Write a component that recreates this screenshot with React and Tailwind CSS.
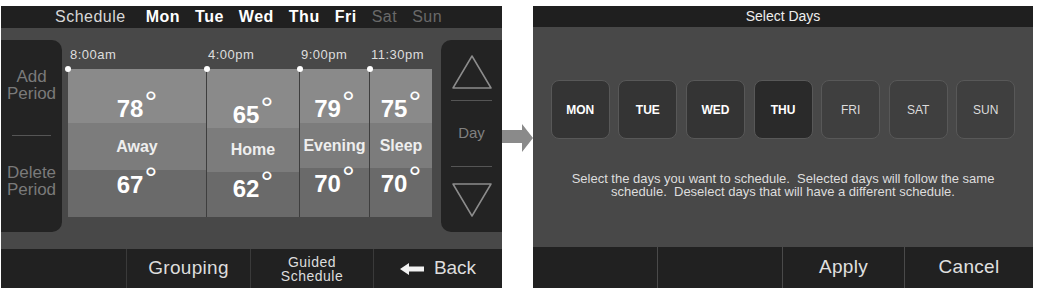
import React from "react";

const columns = [
  { time: "8:00am", w: "w-[138px]", hi: 78, lo: 67, name: "Away", rows: ["h-[54px]", "h-[47px]", "h-[47px]"], pb: "pb-[2px]", pt: "pt-[3px]" },
  { time: "4:00pm", w: "w-[93px]", hi: 65, lo: 62, name: "Home", rows: ["h-[59px]", "h-[44px]", "h-[45px]"], pb: "pb-[1px]", pt: "pt-[5px]" },
  { time: "9:00pm", w: "w-[70px]", hi: 79, lo: 70, name: "Evening", rows: ["h-[54px]", "h-[45px]", "h-[49px]"], pb: "pb-[2px]", pt: "pt-[4px]" },
  { time: "11:30pm", w: "w-[63px]", hi: 75, lo: 70, name: "Sleep", rows: ["h-[54px]", "h-[45px]", "h-[49px]"], pb: "pb-[2px]", pt: "pt-[4px]" },
];

const days = [
  { label: "MON", state: "on" },
  { label: "TUE", state: "on" },
  { label: "WED", state: "on" },
  { label: "THU", state: "current" },
  { label: "FRI", state: "off" },
  { label: "SAT", state: "off" },
  { label: "SUN", state: "off" },
];

const Temp = ({ value }) => (
  <span className="text-[24px] leading-none font-bold text-white">
    {value}
    <span className="font-normal text-[32px] leading-[0px] align-[4px] ml-[1px]">°</span>
  </span>
);

const Triangle = ({ down }) => (
  <svg width="42" height="36" viewBox="0 0 42 36">
    <path
      d={down ? "M21 34 L40 2 L2 2 Z" : "M21 2 L40 34 L2 34 Z"}
      fill="none"
      stroke="#8c8c8c"
      strokeWidth="1.5"
      strokeLinejoin="round"
    />
  </svg>
);

const ScheduleColumn = ({ col, first }) => (
  <div className={`flex flex-col ${col.w}`}>
    <div className="h-[29px] leading-[29px] text-[13px] tracking-[0.5px] text-[#dedede] pl-[2px] whitespace-nowrap">
      {col.time}
    </div>
    <div className={`relative flex flex-col ${first ? "" : "border-l border-[#3e3e3e]"}`}>
      <span className="absolute -left-[3px] -top-[3px] w-[6px] h-[6px] rounded-full bg-white" />
      <div className={`${col.rows[0]} bg-[#8a8a8a] flex items-end justify-center ${col.pb}`}>
        <Temp value={col.hi} />
      </div>
      <div className={`${col.rows[1]} bg-[#7c7c7c] flex items-center justify-center text-[16px] font-bold text-[#eeeeee]`}>
        {col.name}
      </div>
      <div className={`${col.rows[2]} bg-[#6a6a6a] flex items-start justify-center ${col.pt}`}>
        <Temp value={col.lo} />
      </div>
    </div>
  </div>
);

const ScheduleScreen = () => (
  <div className="w-[501px] h-[282px] flex flex-col bg-[#484848]">
    <div className="h-[22px] bg-[#202020] flex items-center pl-[54px] text-[16px] tracking-[0.5px] gap-[15px]">
      <span className="text-[#d8d8d8] mr-[5px]">Schedule</span>
      <span className="font-bold text-white">Mon</span>
      <span className="font-bold text-white">Tue</span>
      <span className="font-bold text-white">Wed</span>
      <span className="font-bold text-white">Thu</span>
      <span className="font-bold text-white">Fri</span>
      <span className="text-[#696969]">Sat</span>
      <span className="text-[#696969]">Sun</span>
    </div>

    <div className="flex-1 flex items-start pt-[12px]">
      <div className="w-[61px] h-[192px] bg-[#232323] rounded-r-[10px] flex flex-col text-[17px] leading-[17px] text-[#7a7a7a] text-center">
        <div className="h-[95px] flex flex-col items-center justify-center pb-[6px]">
          <span>Add</span>
          <span>Period</span>
        </div>
        <div className="h-px mx-[11px] bg-[#555555]" />
        <div className="flex-1 flex flex-col items-center justify-center pb-[6px]">
          <span>Delete</span>
          <span>Period</span>
        </div>
      </div>

      <div className="flex ml-[6px] mr-[9px] w-[364px]">
        {columns.map((col, i) => (
          <ScheduleColumn key={col.name} col={col} first={i === 0} />
        ))}
      </div>

      <div className="w-[61px] h-[192px] bg-[#232323] rounded-l-[10px] flex flex-col">
        <div className="h-[60px] flex items-center justify-center pt-[4px]">
          <Triangle />
        </div>
        <div className="h-px mx-[10px] bg-[#555555]" />
        <div className="h-[65px] flex items-center justify-center text-[15px] text-[#808080]">Day</div>
        <div className="h-px mx-[10px] bg-[#555555]" />
        <div className="flex-1 flex items-center justify-center">
          <Triangle down />
        </div>
      </div>
    </div>

    <div className="h-[39px] bg-[#212121] grid grid-cols-[125px_124px_123px_1fr] text-[#dddddd]">
      <div />
      <div className="border-l border-[#3a3a3a] flex items-center justify-center text-[19px] tracking-[0.3px]">
        Grouping
      </div>
      <div className="border-l border-[#3a3a3a] flex flex-col items-center justify-center text-[14px] leading-[14px] tracking-[0.5px]">
        <span>Guided</span>
        <span>Schedule</span>
      </div>
      <div className="border-l border-[#3a3a3a] flex items-center justify-center gap-[10px] text-[19px]">
        <svg width="24" height="12" viewBox="0 0 24 12">
          <path d="M0 6 L9 0 L9 3.5 L24 3.5 L24 8.5 L9 8.5 L9 12 Z" fill="#f2f2f2" />
        </svg>
        <span>Back</span>
      </div>
    </div>
  </div>
);

const DayButton = ({ day }) => {
  const fill =
    day.state === "current" ? "bg-[#2a2a2a]" : day.state === "on" ? "bg-[#343434]" : "bg-[#3f3f3f]";
  const text = day.state === "off" ? "font-normal text-[#dcdcdc]" : "font-bold text-white";
  return (
    <div
      className={`w-[59px] h-[59px] rounded-[8px] border border-[#585858] flex items-center justify-center text-[12px] ${fill} ${text}`}
    >
      {day.label}
    </div>
  );
};

const SelectDaysScreen = () => (
  <div className="w-[500px] h-[282px] flex flex-col bg-[#484848]">
    <div className="h-[21px] bg-[#1f1f1f] flex items-center justify-center text-[14px] text-[#eeeeee]">
      Select Days
    </div>
    <div className="flex-1 flex flex-col items-center pt-[53px]">
      <div className="flex gap-[8.6px]">
        {days.map((d) => (
          <DayButton key={d.label} day={d} />
        ))}
      </div>
      <p className="mt-[33px] text-center text-[13px] leading-[13px] text-[#dddddd] whitespace-nowrap">
        Select the days you want to schedule.{"\u00a0 "}Selected days will follow the same
        <br />
        schedule.{"\u00a0 "}Deselect days that will have a different schedule.
      </p>
    </div>
    <div className="h-[41px] bg-[#212121] grid grid-cols-[124px_125px_122px_1fr] text-[19px] tracking-[0.3px] text-[#e0e0e0]">
      <div />
      <div className="border-l border-[#4a4a4a]" />
      <div className="border-l border-[#4a4a4a] flex items-center justify-center">Apply</div>
      <div className="border-l border-[#4a4a4a] flex items-center justify-center">Cancel</div>
    </div>
  </div>
);

export default function App() {
  return (
    <div className="w-[1037px] h-[294px] bg-white flex items-start pt-[6px] pl-[1px] font-['Liberation_Sans',Arial,sans-serif]">
      <ScheduleScreen />
      <div className="w-[31px] pt-[118px]">
        <svg width="31" height="28" viewBox="0 0 31 28">
          <path d="M0 6 L20 6 L20 0 L31 14 L20 28 L20 19 L0 19 Z" fill="#8a8a8a" />
        </svg>
      </div>
      <SelectDaysScreen />
    </div>
  );
}
